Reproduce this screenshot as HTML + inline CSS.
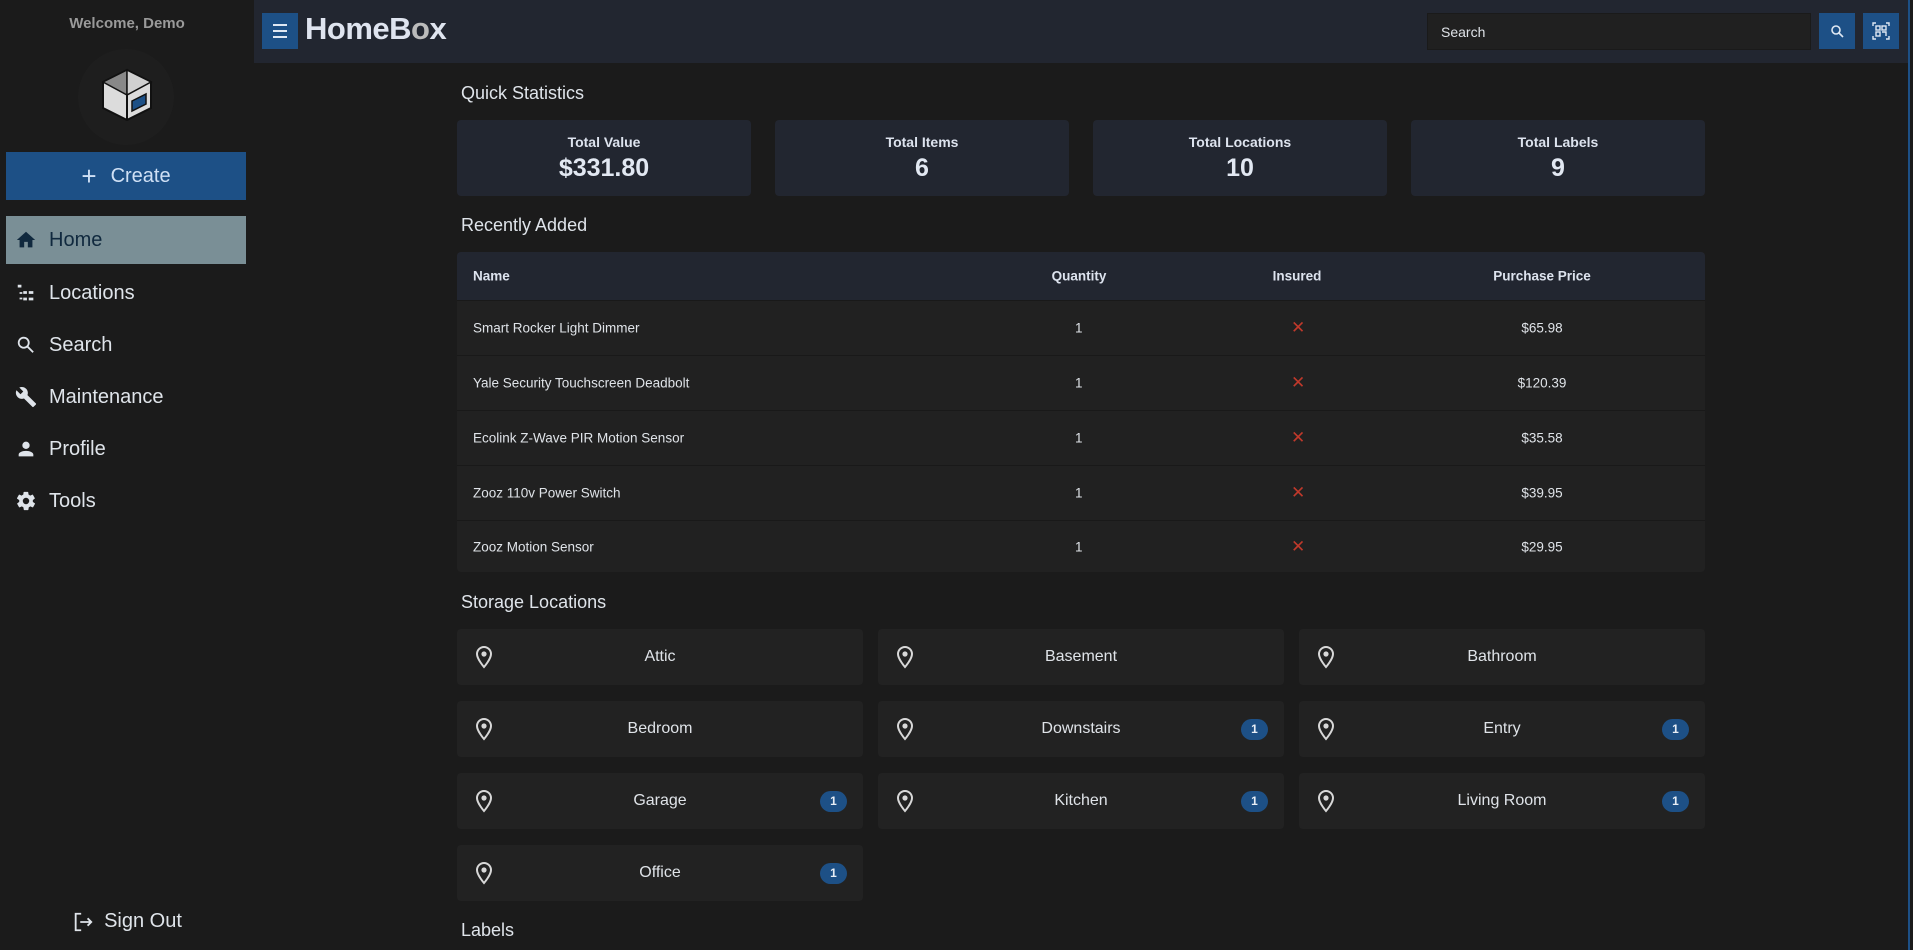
<!DOCTYPE html>
<html><head><meta charset="utf-8"><style>
*{box-sizing:border-box;margin:0;padding:0}
body{width:1913px;height:950px;overflow:hidden;background:#1b1b1b;font-family:"Liberation Sans",sans-serif;color:#d4dbe6;position:relative}
.a{position:absolute}
.side{left:0;top:0;width:254px;height:950px;background:#1b1b1b}
.nav{left:6px;width:240px;height:48px;display:flex;align-items:center;font-size:20px;color:#dfe4ea}
.nav svg{width:22px;height:22px;margin:0 12px 0 9px;fill:#dfe4ea}
.hdr{left:254px;top:0;width:1654px;height:63px;background:#222630}
.card{background:#222630;border-radius:4px;text-align:center}
.card .t{font-size:14px;font-weight:bold;margin-top:14px;color:#dde3ee}
.card .v{font-size:25px;font-weight:bold;margin-top:4px;color:#e2e8f2}
.h2{font-size:18px;color:#dfe4ea;left:461px}
.tbl{left:457px;top:252px;width:1248px;height:320px;background:#212121;border-radius:4px;overflow:hidden}
.row{position:absolute;left:0;width:1248px;height:55px;border-top:1px solid #191919;font-size:13.5px;color:#dfe3e8}
.row span{position:absolute;top:50%;transform:translateY(-50%)}
.loc{width:406px;height:56px;background:#222222;border-radius:4px;display:flex;align-items:center;justify-content:center;font-size:16px;color:#dfe3e8}
.loc svg{position:absolute;left:18px;top:16px;width:18px;height:24px}
.bd{position:absolute;right:16px;top:18px;width:27px;height:21px;border-radius:11px;background:#1d5086;color:#e8eef5;font-size:12px;font-weight:bold;line-height:21px;text-align:center}
</style></head><body>
<div class="a side">
 <div class="a" style="left:0;top:15px;width:254px;text-align:center;font-size:15px;font-weight:bold;color:#9a9a9a">Welcome, Demo</div>
 <div class="a" style="left:78px;top:49px;width:96px;height:96px;border-radius:50%;background:#1e1e1e"></div>
 <svg class="a" style="left:100px;top:68px" width="54" height="54" viewBox="0 0 54 54">
  <polygon points="27,2 51,14 51,40 27,52 3,40 3,14" fill="#dcdcdc" stroke="#111" stroke-width="2"/>
  <polygon points="27,2 3,14 27,27" fill="#888" stroke="#111" stroke-width="1.5"/>
  <polygon points="27,2 51,14 27,27" fill="#d0d0d0" stroke="#111" stroke-width="1.5"/>
  <line x1="27" y1="27" x2="27" y2="52" stroke="#111" stroke-width="2"/>
  <polygon points="32,33 46,26 46,36 32,43" fill="#1d5086" stroke="#111" stroke-width="1.5"/>
 </svg>
 <div class="a" style="left:6px;top:152px;width:240px;height:48px;background:#1d5086;color:#cfe0f5;font-size:20px;display:flex;align-items:center;justify-content:center"><span style="font-size:26px;margin-right:14px;font-weight:300">+</span>Create</div>
 <div class="a nav" style="top:216px;background:#7a8f96;color:#10293e"><svg viewBox="0 0 24 24" style="fill:#10293e"><path d="M10 20v-6h4v6h5v-8h3L12 3 2 12h3v8z"/></svg>Home</div>
 <div class="a nav" style="top:269px"><svg viewBox="0 0 24 24"><path d="M3 3h4v3H3zM3 6h2v13h3v-2H5v-4h3v-2H5V6zM9 10h4v3H9zM15 10h5v3h-5zM9 17h4v3H9zM15 17h5v3h-5z"/></svg>Locations</div>
 <div class="a nav" style="top:321px"><svg viewBox="0 0 24 24"><path d="M9.5 3a6.5 6.5 0 0 1 5.2 10.4l5.8 5.8-1.4 1.4-5.8-5.8A6.5 6.5 0 1 1 9.5 3m0 2a4.5 4.5 0 1 0 0 9 4.5 4.5 0 0 0 0-9z"/></svg>Search</div>
 <div class="a nav" style="top:373px"><svg viewBox="0 0 24 24"><path d="M22.7 19l-9.1-9.1c.9-2.3.4-5-1.5-6.9-2-2-5-2.4-7.4-1.3L9 6 6 9 1.6 4.7C.4 7.1.9 10.1 2.9 12.1c1.9 1.9 4.6 2.4 6.900 1.5l9.1 9.1c.4.4 1 .4 1.4 0l2.3-2.3c.5-.4.5-1.1.1-1.4z"/></svg>Maintenance</div>
 <div class="a nav" style="top:425px"><svg viewBox="0 0 24 24"><path d="M12 4a4 4 0 1 1 0 8 4 4 0 0 1 0-8m0 10c4.4 0 8 1.8 8 4v2H4v-2c0-2.2 3.6-4 8-4z"/></svg>Profile</div>
 <div class="a nav" style="top:477px"><svg viewBox="0 0 24 24"><path d="M12 15.5a3.5 3.5 0 1 1 0-7 3.5 3.5 0 0 1 0 7m7.4-2.5c.1-.3.1-.7.1-1s0-.7-.1-1l2.1-1.6c.2-.2.2-.4.1-.6l-2-3.5c-.1-.2-.4-.3-.6-.2l-2.5 1c-.5-.4-1.1-.7-1.7-1l-.4-2.6c0-.2-.2-.4-.5-.4h-4c-.2 0-.4.2-.5.4l-.4 2.6c-.6.3-1.2.6-1.7 1l-2.5-1c-.2-.1-.5 0-.6.2l-2 3.5c-.1.2-.1.4.1.6L4.6 11v2l-2.1 1.6c-.2.2-.2.4-.1.6l2 3.5c.1.2.4.3.6.2l2.5-1c.5.4 1.1.7 1.7 1l.4 2.6c0 .2.2.4.5.4h4c.2 0 .4-.2.5-.4l.4-2.6c.6-.3 1.2-.6 1.7-1l2.5 1c.2.1.5 0 .6-.2l2-3.5c.1-.2.1-.4-.1-.6z"/></svg>Tools</div>
 <div class="a" style="left:0;top:910px;width:254px;display:flex;justify-content:center;align-items:center;font-size:20px;color:#dfe4ea">
  <svg width="22" height="22" viewBox="0 0 24 24" fill="none" stroke="#dfe4ea" stroke-width="2" style="margin-right:10px"><path d="M10 3H4v18h6M9 12h12M17 8l4 4-4 4"/></svg>Sign Out</div>
</div>
<div class="a" style="left:1908px;top:0;width:5px;height:950px;background:#1b1b1b;border-left:2px solid #1d5086"></div>
<div class="a hdr">
 <div class="a" style="left:8px;top:13px;width:36px;height:36px;background:#1d5086"><svg width="36" height="36" viewBox="0 0 36 36"><path d="M11 12h14M11 18h14M11 24h14" stroke="#dfe8f3" stroke-width="2"/></svg></div>
 <div class="a" style="left:51px;top:11px;font-size:31px;font-weight:bold;color:#dfe4ef;letter-spacing:-0.5px">HomeB<span style="color:#bbb">o</span>x</div>
 <div class="a" style="left:1173px;top:13px;width:384px;height:37px;background:#202020;border:1px solid #1a1a1a;font-size:14px;color:#dfe3e8;padding:10px 13px">Search</div>
 <div class="a" style="left:1565px;top:13px;width:36px;height:36px;background:#1d5086"><svg width="36" height="36" viewBox="0 0 36 36" fill="none" stroke="#dfe8f3" stroke-width="1.6"><circle cx="17" cy="17" r="4"/><path d="M20 20l4 4"/></svg></div>
 <div class="a" style="left:1609px;top:13px;width:36px;height:36px;background:#1d5086"><svg width="36" height="36" viewBox="0 0 36 36" fill="none" stroke="#dfe8f3" stroke-width="1.4"><path d="M10 13v-3h3M23 10h3v3M26 23v3h-3M13 26h-3v-3"/><rect x="13" y="13" width="4" height="4"/><rect x="19" y="13" width="4" height="4"/><rect x="13" y="19" width="4" height="4"/><path d="M19 19h4v4"/></svg></div>
</div>
<div class="a h2" style="top:83px">Quick Statistics</div>
<div class="a card" style="left:457px;top:120px;width:294px;height:76px"><div class="t">Total Value</div><div class="v">$331.80</div></div>
<div class="a card" style="left:775px;top:120px;width:294px;height:76px"><div class="t">Total Items</div><div class="v">6</div></div>
<div class="a card" style="left:1093px;top:120px;width:294px;height:76px"><div class="t">Total Locations</div><div class="v">10</div></div>
<div class="a card" style="left:1411px;top:120px;width:294px;height:76px"><div class="t">Total Labels</div><div class="v">9</div></div>
<div class="a h2" style="top:215px">Recently Added</div>
<div class="a tbl">
 <div class="row" style="top:0;height:48px;background:#222630;border:none;font-weight:bold;font-size:13.5px;color:#dde3ee"><span style="left:16px">Name</span><span style="left:622px;width:0;display:flex;justify-content:center">Quantity</span><span style="left:840px;width:0;display:flex;justify-content:center">Insured</span><span style="left:1085px;width:0;display:flex;justify-content:center;white-space:nowrap">Purchase Price</span></div>
 <div class="row" style="top:48px"><span style="left:618px">1</span><span style="left:16px">Smart Rocker Light Dimmer</span><span style="left:834px;color:#c0392b;font-size:17px">✕</span><span style="left:1085px;width:0;display:flex;justify-content:center">$65.98</span></div>
 <div class="row" style="top:103px"><span style="left:16px">Yale Security Touchscreen Deadbolt</span><span style="left:618px">1</span><span style="left:834px;color:#c0392b;font-size:17px">✕</span><span style="left:1085px;width:0;display:flex;justify-content:center">$120.39</span></div>
 <div class="row" style="top:158px"><span style="left:16px">Ecolink Z-Wave PIR Motion Sensor</span><span style="left:618px">1</span><span style="left:834px;color:#c0392b;font-size:17px">✕</span><span style="left:1085px;width:0;display:flex;justify-content:center">$35.58</span></div>
 <div class="row" style="top:213px"><span style="left:16px">Zooz 110v Power Switch</span><span style="left:618px">1</span><span style="left:834px;color:#c0392b;font-size:17px">✕</span><span style="left:1085px;width:0;display:flex;justify-content:center">$39.95</span></div>
 <div class="row" style="top:268px;height:52px"><span style="left:16px">Zooz Motion Sensor</span><span style="left:618px">1</span><span style="left:834px;color:#c0392b;font-size:17px">✕</span><span style="left:1085px;width:0;display:flex;justify-content:center">$29.95</span></div>
</div>
<div class="a h2" style="top:592px">Storage Locations</div>
<svg width="0" height="0" style="position:absolute"><defs><symbol id="pin" viewBox="0 0 18 24"><path d="M9 2a7 7 0 0 1 7 7c0 5-7 13-7 13S2 14 2 9a7 7 0 0 1 7-7z" fill="none" stroke="#d8d8d8" stroke-width="2"/><circle cx="9" cy="9" r="2.6" fill="#d8d8d8"/></symbol></defs></svg>
<div class="a loc" style="left:457px;top:629px"><svg><use href="#pin"/></svg>Attic</div>
<div class="a loc" style="left:878px;top:629px"><svg><use href="#pin"/></svg>Basement</div>
<div class="a loc" style="left:1299px;top:629px"><svg><use href="#pin"/></svg>Bathroom</div>
<div class="a loc" style="left:457px;top:701px"><svg><use href="#pin"/></svg>Bedroom</div>
<div class="a loc" style="left:878px;top:701px"><svg><use href="#pin"/></svg>Downstairs<div class="bd">1</div></div>
<div class="a loc" style="left:1299px;top:701px"><svg><use href="#pin"/></svg>Entry<div class="bd">1</div></div>
<div class="a loc" style="left:457px;top:773px"><svg><use href="#pin"/></svg>Garage<div class="bd">1</div></div>
<div class="a loc" style="left:878px;top:773px"><svg><use href="#pin"/></svg>Kitchen<div class="bd">1</div></div>
<div class="a loc" style="left:1299px;top:773px"><svg><use href="#pin"/></svg>Living Room<div class="bd">1</div></div>
<div class="a loc" style="left:457px;top:845px"><svg><use href="#pin"/></svg>Office<div class="bd">1</div></div>
<div class="a h2" style="top:920px">Labels</div>
</body></html>
